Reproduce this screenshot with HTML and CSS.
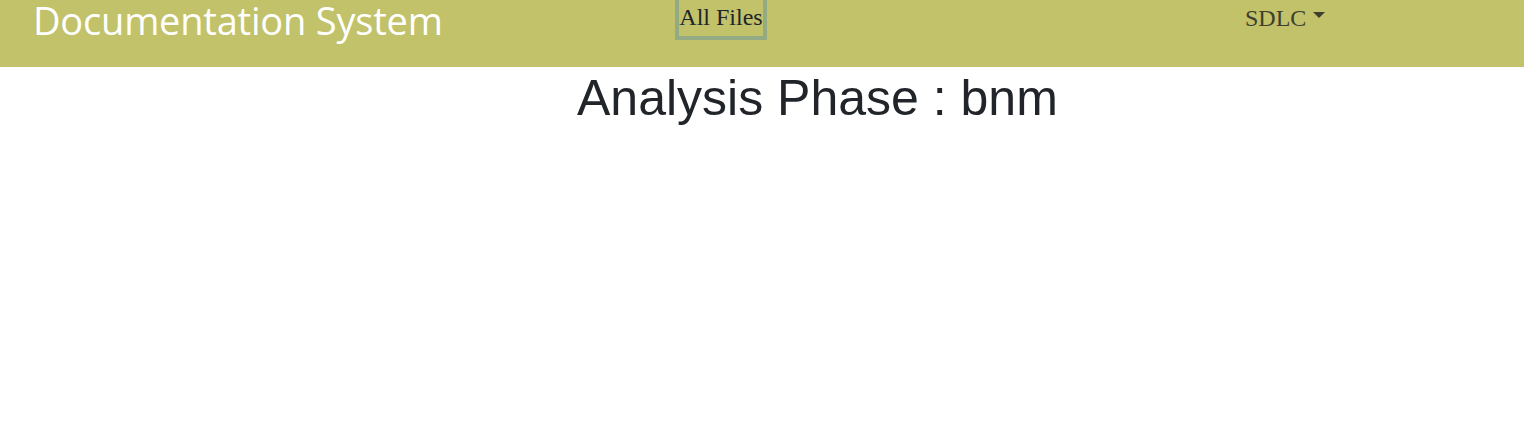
FILE: index.html
```html
<!DOCTYPE html>
<html>
<head>
<meta charset="utf-8">
<link rel="stylesheet" href="styles.css">
</head>
<body>
<nav class="navbar">
  <div class="brand">Documentation System</div>
  <div class="all-files">All Files</div>
  <div class="dropdown">SDLC<span class="caret"></span></div>
</nav>
<main class="content">
  <h1 class="title">Analysis Phase : bnm</h1>
</main>
</body>
</html>
```
FILE: styles.css
```css
* { box-sizing: border-box; }
body {
  margin: 0;
  background: #ffffff;
  font-family: "Liberation Serif", serif;
}
.navbar {
  height: 67px;
  background: #c1c26a;
  display: flex;
  align-items: flex-start;
}
.brand {
  font-family: "Open Sans", "Noto Sans", sans-serif;
  color: #ffffff;
  font-size: 38px;
  line-height: 52px;
  margin-top: -6px;
  padding-left: 33px;
  width: 675px;
  letter-spacing: -0.2px;
  white-space: nowrap;
}
.all-files {
  border: 4px solid #94aa82;
  border-top: none;
  height: 40px;
  width: 92px;
  padding-top: 2px;
  font-size: 24px;
  line-height: 30px;
  color: #212529;
  text-align: center;
  white-space: nowrap;
}
.dropdown {
  margin-left: 478px;
  padding-top: 4px;
  font-size: 24px;
  line-height: 28px;
  color: #3f3f2f;
  display: flex;
  align-items: center;
}
.caret {
  display: inline-block;
  margin-left: 7px;
  margin-top: -6px;
  width: 0;
  height: 0;
  border-left: 6px solid transparent;
  border-right: 6px solid transparent;
  border-top: 6px solid #3f3f2f;
}
.content {
  padding-left: 577px;
}
.title {
  margin: 0;
  font-family: "Liberation Sans", Arial, sans-serif;
  font-weight: normal;
  font-size: 50px;
  line-height: 62px;
  color: #212529;
}
```
